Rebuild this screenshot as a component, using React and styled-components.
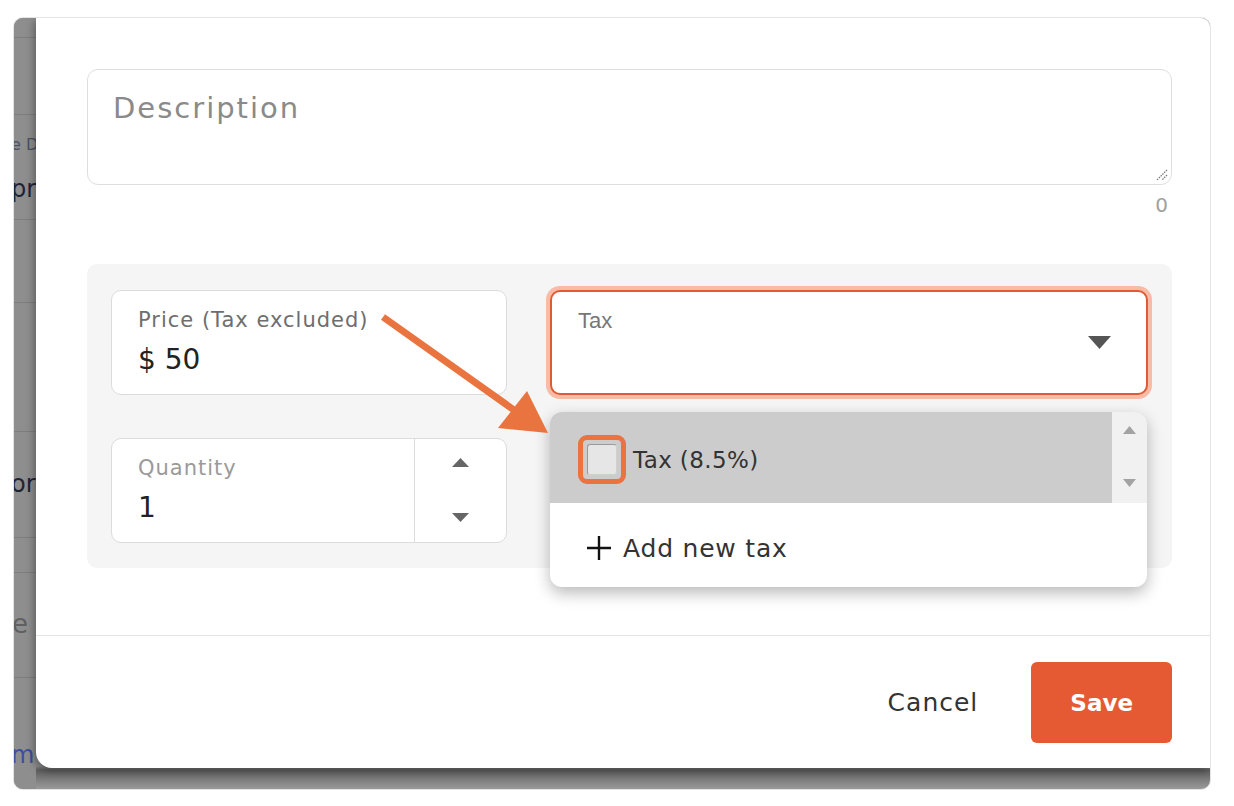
import React from 'react';
import styled, { createGlobalStyle } from 'styled-components';

// ================= style ======================= //
const GlobalStyle = createGlobalStyle`
    html, body { margin: 0; padding: 0; background: #ffffff; }
    body { font-family: "DejaVu Sans", "Noto Sans", sans-serif; }
`;

const Page = styled.div`
    position: relative;
    width: 1234px;
    height: 806px;
    padding: 17px 23px 16px 13px;
    box-sizing: border-box;
`;

const Frame = styled.div`
    width: 1198px;
    height: 773px;
    box-sizing: border-box;
    border: 1px solid #e4e4e4;
    border-radius: 10px;
    overflow: hidden;
    display: grid;
    grid-template-columns: 22px 1fr;
    background: linear-gradient(#8e8e8e 0, #8e8e8e 748px, #5f5f5f 752px, #9a9a9a 771px);
`;

const Backdrop = styled.div`
    display: flex;
    flex-direction: column;
    background: #8e8e8e;
    overflow: hidden;
`;

const BackdropRow = styled.div`
    height: ${(props) => props.h}px;
    flex: none;
    box-sizing: border-box;
    border-bottom: 1px solid #7e7e7e;
    display: flex;
    flex-direction: column;
    justify-content: ${(props) => props.justify || 'center'};
    white-space: nowrap;
    overflow: hidden;
    &:last-child { border-bottom: none; flex: 1; }
`;

const Fragment = styled.span`
    display: block;
    margin-left: ${(props) => props.shift || 0}px;
    margin-top: ${(props) => props.top || 0}px;
    font-family: "DejaVu Sans", sans-serif;
    font-size: ${(props) => props.size || 22}px;
    line-height: 1.2;
    color: ${(props) => props.color || '#1f2430'};
`;

const Modal = styled.div`
    height: 750px;
    background: #ffffff;
    border-bottom-left-radius: 16px;
    box-shadow: -2px 3px 8px rgba(0, 0, 0, 0.35);
    display: flex;
    flex-direction: column;
`;

const Body = styled.div`
    padding: 51px 38px 67px 51px;
`;

const TextArea = styled.div`
    position: relative;
    height: 116px;
    box-sizing: border-box;
    border: 1.5px solid #dedede;
    border-radius: 11px;
    padding: 21px 25px;
    font-size: 29px;
    letter-spacing: 2px;
    color: #8a8a8a;
`;

const Grip = styled.svg`
    position: absolute;
    right: 3px;
    bottom: 3px;
`;

const Counter = styled.div`
    margin-top: 6px;
    padding-right: 4px;
    text-align: right;
    font-size: 20px;
    line-height: 28px;
    color: #a0a0a0;
`;

const Panel = styled.div`
    margin-top: 45px;
    background: #f5f5f5;
    border-radius: 10px;
    padding: 26px 24px 25px 24px;
    display: grid;
    grid-template-columns: 396px 1fr;
    column-gap: 43px;
    row-gap: 43px;
`;

const Field = styled.div`
    position: relative;
    height: 105px;
    box-sizing: border-box;
    background: #ffffff;
    border: ${(props) => (props.active ? '2px solid #e05a35' : '1.5px solid #dcdcdc')};
    box-shadow: ${(props) => (props.active ? '0 0 0 4px #f7bba6' : 'none')};
    border-radius: 10px;
    display: flex;
    align-items: stretch;
`;

const FieldMain = styled.div`
    flex: 1;
    padding: 17px 26px;
`;

const Label = styled.div`
    font-family: ${(props) => (props.narrow ? '"Liberation Sans", sans-serif' : '"DejaVu Sans", sans-serif')};
    font-size: ${(props) => (props.narrow ? 22 : 21)}px;
    letter-spacing: ${(props) => (props.narrow ? 0 : 1)}px;
    line-height: 24px;
    color: ${(props) => props.color || '#6e6e6e'};
`;

const Value = styled.div`
    margin-top: 10px;
    font-size: 28px;
    line-height: 36px;
    color: #222222;
`;

const Caret = styled.svg`
    align-self: center;
    margin-right: 35px;
`;

const Spinner = styled.div`
    width: 92px;
    border-left: 1.5px solid #dcdcdc;
    display: flex;
    flex-direction: column;
    align-items: center;
    justify-content: space-between;
    padding: 19px 0 20px;
    box-sizing: border-box;
`;

const Dropdown = styled.div`
    position: absolute;
    top: 120px;
    left: -2px;
    width: 597px;
    background: #ffffff;
    border-radius: 12px;
    box-shadow: 0 6px 16px rgba(0, 0, 0, 0.28);
    overflow: hidden;
    z-index: 2;
`;

const OptionRow = styled.div`
    display: flex;
    height: 91px;
    background: #cccccc;
`;

const OptionMain = styled.div`
    flex: 1;
    display: flex;
    align-items: center;
    padding: 4px 0 0 28px;
    gap: 7px;
    font-size: 23px;
    letter-spacing: 0.4px;
    color: #333333;
`;

const Highlight = styled.div`
    width: 48px;
    height: 49px;
    box-sizing: border-box;
    border: 5px solid #eb7340;
    border-radius: 9px;
    display: flex;
    align-items: center;
    justify-content: center;
`;

const Check = styled.div`
    width: 30px;
    height: 31px;
    box-sizing: border-box;
    background: #e6e6e6;
    border: 1.5px solid #9a9a9a;
    border-right-color: #d0d0d0;
    border-bottom-color: #d0d0d0;
    border-radius: 3px;
`;

const ScrollBar = styled.div`
    width: 35px;
    background: #f1f1f1;
    display: flex;
    flex-direction: column;
    align-items: center;
    justify-content: space-between;
    padding: 14px 0 16px;
    box-sizing: border-box;
`;

const AddRow = styled.div`
    height: 84px;
    display: flex;
    align-items: center;
    gap: 11px;
    padding: 6px 0 0 36px;
    box-sizing: border-box;
    font-size: 25px;
    letter-spacing: 0.8px;
    color: #333333;
`;

const Footer = styled.div`
    flex: 1;
    border-top: 1.5px solid #e4e4e4;
    display: flex;
    justify-content: flex-end;
    align-items: flex-start;
    padding: 26px 38px 0 0;
    gap: 27px;
`;

const Button = styled.button`
    height: 81px;
    border: none;
    border-radius: 6px;
    padding: 0 ${(props) => (props.primary ? 39 : 26)}px;
    background: ${(props) => (props.primary ? '#e65a33' : 'transparent')};
    color: ${(props) => (props.primary ? '#ffffff' : '#333333')};
    font-family: "DejaVu Sans", sans-serif;
    font-size: ${(props) => (props.primary ? 23 : 25)}px;
    letter-spacing: ${(props) => (props.primary ? 0 : 1)}px;
    font-weight: ${(props) => (props.primary ? 700 : 400)};
`;

const Annotation = styled.svg`
    position: absolute;
    left: 0;
    top: 0;
    pointer-events: none;
    z-index: 5;
`;

// ================= parts ======================= //
const Triangle = ({ up, w = 16, h = 9, color = '#666' }) => (
    <svg width={w} height={h} viewBox={`0 0 ${w} ${h}`}>
        <polygon points={up ? `0,${h} ${w / 2},0 ${w},${h}` : `0,0 ${w},0 ${w / 2},${h}`} fill={color} />
    </svg>
);

const backdropRows = [
    { h: 20 },
    { h: 77 },
    { h: 105, justify: 'flex-start', items: [
        { text: 'e D', size: 16, color: '#4a5266', shift: -3, top: 20 },
        { text: 'pr', size: 24, color: '#1e2434', shift: -3, top: 21 },
    ] },
    { h: 83 },
    { h: 129 },
    { h: 106, items: [{ text: 'or', size: 24, color: '#1e2434', shift: -3 }] },
    { h: 35 },
    { h: 105, items: [{ text: 'e', size: 26, color: '#606060', shift: -2 }] },
    { h: 0, justify: 'flex-start', items: [{ text: 'm', size: 24, color: '#3b4f9e', shift: -3, top: 63 }] },
];

class App extends React.Component {
    renderBackdrop() {
        return backdropRows.map((row, i) => (
            <BackdropRow key={i} h={row.h} justify={row.justify}>
                {(row.items || []).map((it) => (
                    <Fragment key={it.text} size={it.size} color={it.color} shift={it.shift} top={it.top}>
                        {it.text}
                    </Fragment>
                ))}
            </BackdropRow>
        ));
    }

    render() {
        return (
            <Page>
                <GlobalStyle />
                <Frame>
                    <Backdrop>{this.renderBackdrop()}</Backdrop>
                    <div>
                        <Modal>
                            <Body>
                                <TextArea>
                                    Description
                                    <Grip width="14" height="14" viewBox="0 0 14 14">
                                        <path d="M13 3 L3 13 M13 8 L8 13" stroke="#777" strokeWidth="1.3" strokeDasharray="1.5 1" />
                                    </Grip>
                                </TextArea>
                                <Counter>0</Counter>
                                <Panel>
                                    <Field>
                                        <FieldMain>
                                            <Label>Price (Tax excluded)</Label>
                                            <Value>$ 50</Value>
                                        </FieldMain>
                                    </Field>
                                    <Field active>
                                        <FieldMain>
                                            <Label narrow color="#777">Tax</Label>
                                        </FieldMain>
                                        <Caret width="23" height="13" viewBox="0 0 23 13">
                                            <polygon points="0,0 23,0 11.5,13" fill="#555" />
                                        </Caret>
                                        <Dropdown>
                                            <OptionRow>
                                                <OptionMain>
                                                    <Highlight><Check /></Highlight>
                                                    Tax (8.5%)
                                                </OptionMain>
                                                <ScrollBar>
                                                    <Triangle up w={13} h={8} color="#a3a3a3" />
                                                    <Triangle w={13} h={8} color="#a3a3a3" />
                                                </ScrollBar>
                                            </OptionRow>
                                            <AddRow>
                                                <svg width="26" height="26" viewBox="0 0 26 26">
                                                    <path d="M13 1 V25 M1 13 H25" stroke="#111" strokeWidth="2.4" />
                                                </svg>
                                                Add new tax
                                            </AddRow>
                                        </Dropdown>
                                    </Field>
                                    <Field>
                                        <FieldMain>
                                            <Label color="#9a9a9a">Quantity</Label>
                                            <Value>1</Value>
                                        </FieldMain>
                                        <Spinner>
                                            <Triangle up w={17} h={9} />
                                            <Triangle w={17} h={9} />
                                        </Spinner>
                                    </Field>
                                </Panel>
                            </Body>
                            <Footer>
                                <Button>Cancel</Button>
                                <Button primary>Save</Button>
                            </Footer>
                        </Modal>
                    </div>
                </Frame>
                <Annotation width="1234" height="806" viewBox="0 0 1234 806">
                    <line x1="383" y1="317" x2="514" y2="410" stroke="#ea7440" strokeWidth="7" />
                    <polygon points="548,433 498,428 527,391" fill="#ea7440" />
                </Annotation>
            </Page>
        );
    }
}

export default App;
